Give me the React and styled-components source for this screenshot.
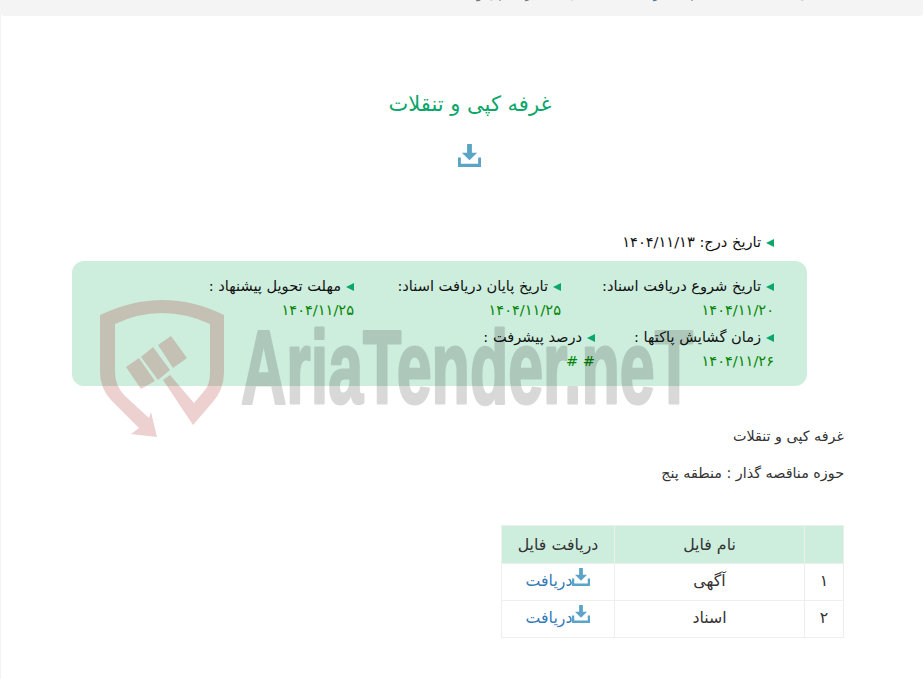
import React from 'react';
import styled, { createGlobalStyle } from 'styled-components';

const GlobalStyle = createGlobalStyle`
  html, body {
    margin: 0;
    padding: 0;
    background: #fff;
    overflow: hidden;
  }
  body {
    font-family: "DejaVu Sans", "Noto Sans", sans-serif;
    font-size: 14px;
    color: #333;
  }
`;

const Page = styled.div`
  position: relative;
  direction: rtl;
  width: 923px;
  height: 679px;
  overflow: hidden;
  border-left: 1px solid #f4f4f4;
  box-sizing: border-box;
`;

const TopBar = styled.div`
  height: 16px;
  background: #f4f4f4;
  border-radius: 0 0 4px 4px;
  overflow: hidden;
`;

const Crumbs = styled.div`
  display: flex;
  gap: 28px;
  padding-right: 58px;
  margin-top: -15px;
  line-height: 18px;
  font-size: 13px;
`;

const Crumb = styled.span`
  color: ${(p) => (p.$muted ? '#777' : '#337ab7')};
`;

const Main = styled.main`
  padding: 75px 79px 0 95px;
`;

const Title = styled.h1`
  margin: 0;
  text-align: center;
  font-size: 21px;
  font-weight: 400;
  line-height: 26px;
  color: #0aa66a;
`;

const TitleIcon = styled.div`
  display: flex;
  justify-content: center;
  margin-top: 27px;
  padding-right: 2px;
  color: #5ba4c8;
`;

const Inserted = styled.div`
  margin: 63px 70px 0 0;
  height: 24px;
  line-height: 24px;
  font-size: 14.6px;
  color: #111;
`;

const InfoBox = styled.section`
  margin: 7px 37px 0 -24px;
  height: 125px;
  box-sizing: border-box;
  padding: 12px 33px 0 0;
  background: #cdeddd;
  border-radius: 12px;
`;

const InfoRow = styled.div`
  display: flex;
  height: 51px;
`;

const InfoItem = styled.div`
  width: ${(p) => p.$width}px;
  flex: none;
`;

const Label = styled.div`
  height: 25px;
  line-height: 25px;
  font-size: 14.6px;
  color: #111;
  white-space: nowrap;
`;

const Marker = styled.span`
  display: inline-block;
  width: 0;
  height: 0;
  margin-left: 5px;
  border-top: 4px solid transparent;
  border-bottom: 4px solid transparent;
  border-right: 8px solid #0aa66a;
`;

const DateText = styled.div`
  height: 24px;
  line-height: 24px;
  font-size: 14.6px;
  color: #058505;
`;

const Paragraph = styled.p`
  margin: 0 0 17px;
  line-height: 20px;
  font-size: 14.3px;
`;

const Body = styled.div`
  margin-top: 40px;
`;

const FileTable = styled.table`
  margin: 42px 0 0;
  width: 342px;
  border-collapse: collapse;
  table-layout: fixed;
  font-size: 15.8px;
`;

const Th = styled.th`
  box-sizing: border-box;
  height: 38px;
  padding: 0;
  font-weight: 400;
  background: #cdeddd;
  border: 1px solid #eee;
  width: ${(p) => p.$width}px;
`;

const Td = styled.td`
  box-sizing: border-box;
  height: 37px;
  padding: 0 0 3px;
  text-align: center;
  border: 1px solid #eee;
`;

const FileLink = styled.a`
  display: inline-flex;
  align-items: center;
  color: #337ab7;
  text-decoration: none;
  svg {
    color: #5ba4c8;
    margin-top: -7px;
  }
`;

const Watermark = styled.svg`
  position: absolute;
  left: -1px;
  top: 0;
  pointer-events: none;
`;

const WatermarkText = styled.text`
  font-family: "Liberation Sans", sans-serif;
  font-weight: 700;
  font-size: 104px;
`;

const DownloadIcon = ({ size }) => (
  <svg width={size} height={size} viewBox="0 0 24 24" fill="currentColor">
    <path d="M9.500 0h5v9H20l-8 8-8-8h5.500z" />
    <path d="M0 14h3v6.500h18V14h3v10H0z" />
  </svg>
);

const items = [
  [
    { label: 'تاریخ شروع دریافت اسناد:', date: '۱۴۰۴/۱۱/۲۰', width: 213 },
    { label: 'تاریخ پایان دریافت اسناد:', date: '۱۴۰۴/۱۱/۲۵', width: 207 },
    { label: 'مهلت تحویل پیشنهاد :', date: '۱۴۰۴/۱۱/۲۵', width: 180 },
  ],
  [
    { label: 'زمان گشایش پاکتها :', date: '۱۴۰۴/۱۱/۲۶', width: 179 },
    { label: 'درصد پیشرفت :', date: '# #', width: 180 },
  ],
];

const files = [
  { id: '۱', name: 'آگهی' },
  { id: '۲', name: 'اسناد' },
];

const App = () => (
  <Page>
    <GlobalStyle />
    <TopBar>
      <Crumbs>
        <Crumb>صفحه اصلی</Crumb>
        <Crumb>مناقصات</Crumb>
        <Crumb>پیمانکاری</Crumb>
        <Crumb>ساختمان</Crumb>
        <Crumb $muted>غرفه کپی و تنقلات</Crumb>
      </Crumbs>
    </TopBar>

    <Main>
      <Title>غرفه کپی و تنقلات</Title>
      <TitleIcon>
        <DownloadIcon size={23} />
      </TitleIcon>

      <Inserted>
        <Marker />
        تاریخ درج: ۱۴۰۴/۱۱/۱۳
      </Inserted>

      <InfoBox>
        {items.map((row, i) => (
          <InfoRow key={i}>
            {row.map((item) => (
              <InfoItem key={item.label} $width={item.width}>
                <Label>
                  <Marker />
                  {item.label}
                </Label>
                <DateText>{item.date}</DateText>
              </InfoItem>
            ))}
          </InfoRow>
        ))}
      </InfoBox>

      <Body>
        <Paragraph>غرفه کپی و تنقلات</Paragraph>
        <Paragraph>حوزه مناقصه گذار : منطقه پنج</Paragraph>
      </Body>

      <FileTable>
        <thead>
          <tr>
            <Th $width={39} />
            <Th $width={190}>نام فایل</Th>
            <Th $width={113}>دریافت فایل</Th>
          </tr>
        </thead>
        <tbody>
          {files.map((file) => (
            <tr key={file.id}>
              <Td>{file.id}</Td>
              <Td>{file.name}</Td>
              <Td>
                <FileLink href="#">
                  <DownloadIcon size={18} />
                  دریافت
                </FileLink>
              </Td>
            </tr>
          ))}
        </tbody>
      </FileTable>
    </Main>

    {/* لوگوی واترمارک روی صفحه */}
    <Watermark width="923" height="679" viewBox="0 0 923 679">
      <g fill="#a00000" opacity="0.18">
        <path d="M100 315 Q132 300 162 300 Q194 300 224 315 L224 372 Q224 390 212 403 L193 425 L163 380 L170 375 L194 403 L205 390 Q210 384 210 372 L210 324 Q186 313 162 313 Q138 313 115 324 L115 372 Q115 386 125 396 L149 418 L151 412 L157 437 L131 434 L139 428 L111 400 Q100 388 100 372 Z" />
        <path d="M158 345 L171 336 L187 358 L173 368 Z" />
        <path d="M141 357 L153 347 L170 370 L158 380 Z" />
        <path d="M126 367 L139 358 L155 381 L141 389 Z" />
      </g>
      <g opacity="0.15" fill="#000" stroke="#000" strokeWidth="3" strokeLinejoin="round">
        <WatermarkText x="241" y="403" textLength="452" lengthAdjust="spacingAndGlyphs" direction="ltr">
          AriaTender.neT
        </WatermarkText>
      </g>
    </Watermark>
  </Page>
);

export default App;
